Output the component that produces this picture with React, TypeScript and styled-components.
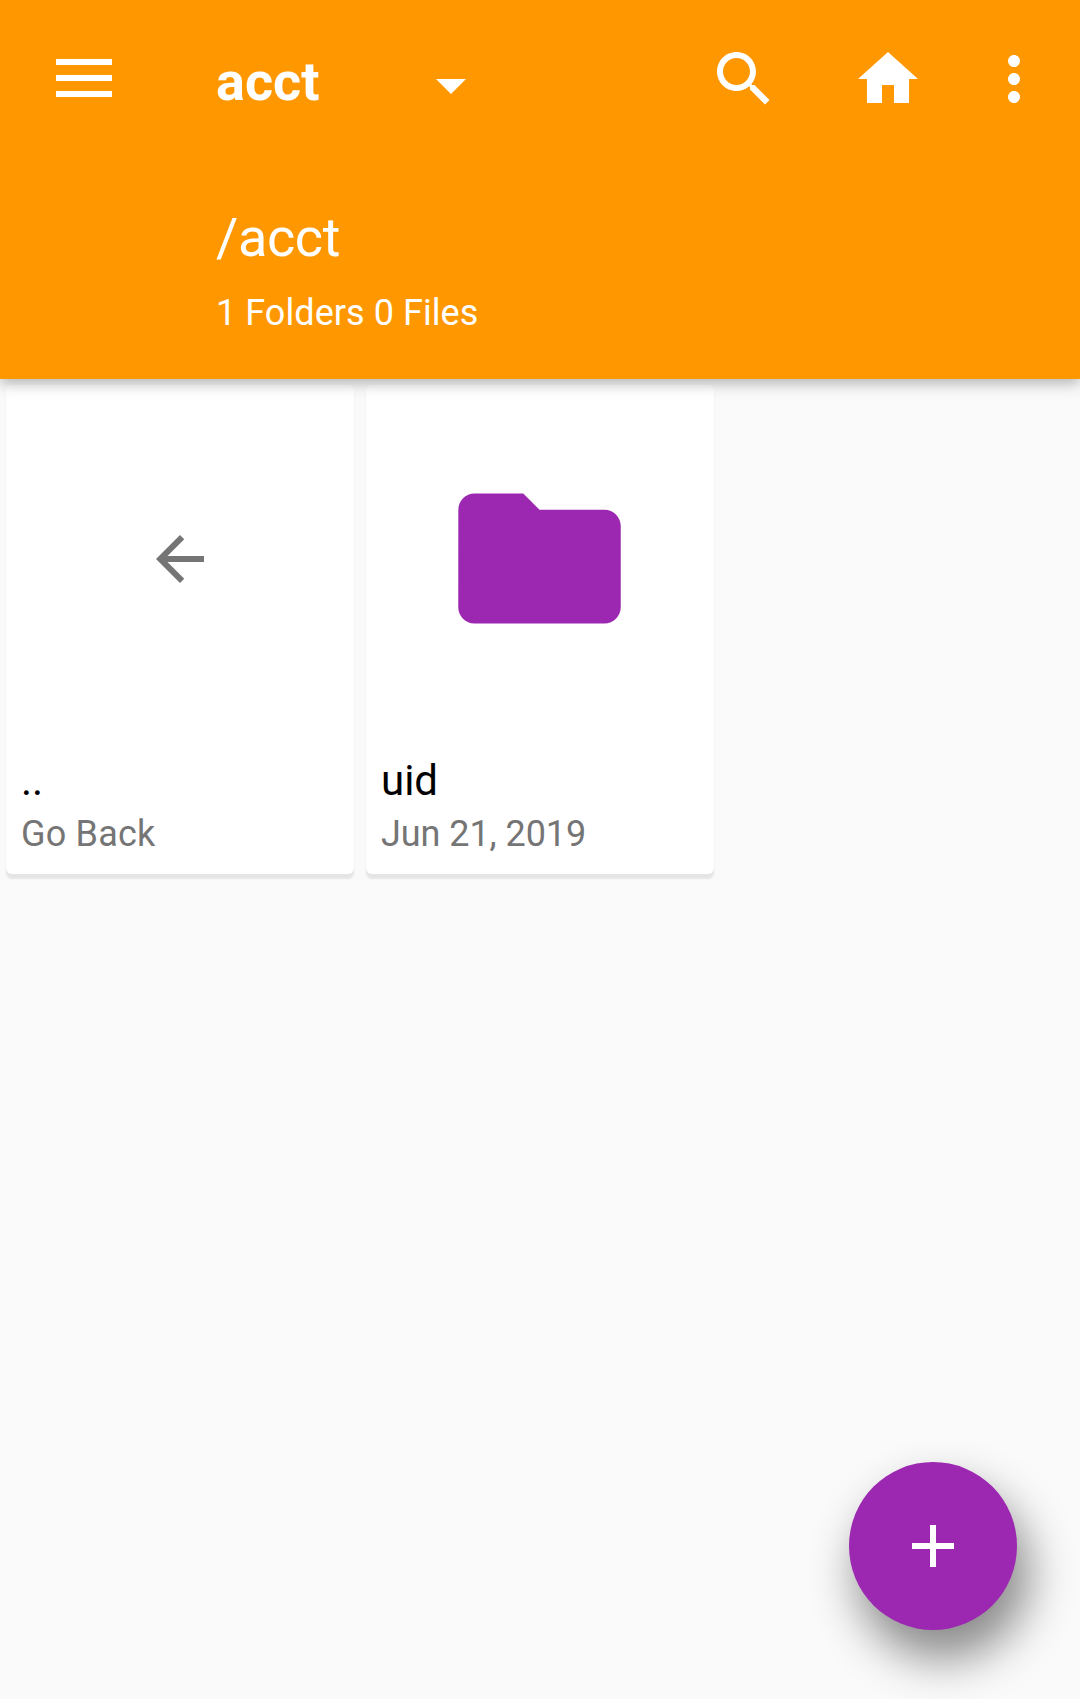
import React from "react";
import styled, { createGlobalStyle } from "styled-components";

const Global = createGlobalStyle`
  * { box-sizing: border-box; }
  html, body { margin: 0; background: #fafafa; }
  body { font-family: Roboto, "Noto Sans", sans-serif; }
`;

const Screen = styled.div`
  display: flex;
  flex-direction: column;
  width: 1080px;
  height: 1699px;
  background: #fafafa;
  overflow: hidden;
`;

const Header = styled.header`
  position: relative;
  z-index: 1;
  flex: none;
  height: 379px;
  background: #ff9800;
  color: #fff;
  box-shadow: 0 4px 14px rgba(0, 0, 0, 0.3);
`;

const Toolbar = styled.div`
  display: flex;
  align-items: center;
  height: 158px;
  padding: 0 12px 0 48px;
`;

const IconButton = styled.button<{ $width?: number; $lift?: number }>`
  display: flex;
  align-items: center;
  justify-content: center;
  width: ${(p) => p.$width ?? 144}px;
  height: 144px;
  margin-bottom: ${(p) => p.$lift ?? 0}px;
  padding: 0;
  border: 0;
  background: none;
  color: inherit;
  svg { display: block; fill: currentColor; }
`;

const PathPicker = styled.div`
  display: flex;
  align-items: center;
  justify-content: space-between;
  width: 271px;
  margin: 12px auto 0 96px;
`;

const Title = styled.h1`
  margin: 0 0 6px;
  font-size: 54px;
  line-height: 64px;
  font-weight: 700;
`;

const Details = styled.div`
  padding: 48px 0 0 216px;
`;

const Path = styled.div`
  font-size: 54px;
  line-height: 64px;
  letter-spacing: -0.35px;
`;

const Summary = styled.div`
  margin-top: 21px;
  font-size: 36px;
  line-height: 44px;
  letter-spacing: 0.06px;
`;

const Grid = styled.main`
  display: grid;
  grid-template-columns: repeat(3, 348px);
  gap: 12px;
  padding: 6px;
`;

const Card = styled.article`
  display: flex;
  flex-direction: column;
  height: 489px;
  border-radius: 6px;
  background: #fff;
  box-shadow: 0 5px 2px rgba(0, 0, 0, 0.085);
`;

const Preview = styled.div`
  display: flex;
  align-items: center;
  justify-content: center;
  height: 348px;
  svg { display: block; }
`;

const FolderIcon = styled.svg`
  width: 195px;
  height: 195px;
  margin: 0 1px 1px 0;
`;

const Caption = styled.div`
  display: flex;
  flex-direction: column;
  padding: 23px 15px 0;
`;

const Name = styled.div`
  font-size: 42px;
  line-height: 50px;
  color: #000;
`;

const Meta = styled.div<{ $tracking: number }>`
  margin-top: 6px;
  font-size: 36px;
  line-height: 44px;
  letter-spacing: ${(p) => p.$tracking}px;
  color: #757575;
`;

const Fab = styled.button`
  position: fixed;
  left: 849px;
  top: 1462px;
  display: flex;
  align-items: center;
  justify-content: center;
  width: 168px;
  height: 168px;
  padding: 0;
  border: 0;
  border-radius: 50%;
  background: #9c27b0;
  box-shadow: 10px 27px 46px 2px rgba(0, 0, 0, 0.45);
`;

const entries = [
  { name: "..", meta: "Go Back", kind: "back", tracking: 0.2 },
  { name: "uid", meta: "Jun 21, 2019", kind: "folder", tracking: -0.06 },
];

const EntryIcon = ({ kind }: { kind: string }) =>
  kind === "back" ? (
    <svg width="72" height="72" viewBox="0 0 24 24" fill="#757575">
      <path d="M20 11H7.83l5.59-5.59L12 4l-8 8 8 8 1.41-1.41L7.83 13H20v-2z" />
    </svg>
  ) : (
    <FolderIcon viewBox="0 0 24 24" fill="#9c27b0">
      <path d="M10 4H4c-1.1 0-1.99.9-1.99 2L2 18c0 1.1.9 2 2 2h16c1.1 0 2-.9 2-2V8c0-1.1-.9-2-2-2h-8l-2-2z" />
    </FolderIcon>
  );

export default function App() {
  return (
    <Screen>
      <Global />
      <Header>
        <Toolbar>
          <IconButton $width={72} $lift={2} aria-label="Menu">
            <svg width="72" height="72" viewBox="0 0 72 72">
              <path d="M8 17h56v6H8zM8 33h56v6H8zM8 49h56v6H8z" />
            </svg>
          </IconButton>
          <PathPicker>
            <Title>acct</Title>
            <svg width="72" height="72" viewBox="0 0 24 24" fill="#fff">
              <path d="M7 10l5 5 5-5z" />
            </svg>
          </PathPicker>
          <IconButton aria-label="Search">
            <svg width="72" height="72" viewBox="0 0 24 24">
              <path d="M15.5 14h-.79l-.28-.27C15.41 12.59 16 11.11 16 9.5 16 5.91 13.09 3 9.5 3S3 5.91 3 9.5 5.91 16 9.5 16c1.61 0 3.09-.59 4.23-1.57l.27.28v.79l5 4.99L20.49 19l-4.99-5zm-6 0C7.01 14 5 11.99 5 9.5S7.01 5 9.5 5 14 7.01 14 9.5 11.99 14 9.5 14z" />
            </svg>
          </IconButton>
          <IconButton aria-label="Home">
            <svg width="72" height="72" viewBox="0 0 24 24">
              <path d="M10 20v-6h4v6h5v-8h3L12 3 2 12h3v8z" />
            </svg>
          </IconButton>
          <IconButton $width={108} aria-label="More options">
            <svg width="72" height="72" viewBox="0 0 24 24">
              <path d="M12 8c1.1 0 2-.9 2-2s-.9-2-2-2-2 .9-2 2 .9 2 2 2zm0 2c-1.1 0-2 .9-2 2s.9 2 2 2 2-.9 2-2-.9-2-2-2zm0 6c-1.1 0-2 .9-2 2s.9 2 2 2 2-.9 2-2-.9-2-2-2z" />
            </svg>
          </IconButton>
        </Toolbar>
        <Details>
          <Path>/acct</Path>
          <Summary>1 Folders 0 Files</Summary>
        </Details>
      </Header>
      <Grid>
        {entries.map((e) => (
          <Card key={e.name}>
            <Preview>
              <EntryIcon kind={e.kind} />
            </Preview>
            <Caption>
              <Name>{e.name}</Name>
              <Meta $tracking={e.tracking}>{e.meta}</Meta>
            </Caption>
          </Card>
        ))}
      </Grid>
      <Fab aria-label="Add">
        <svg width="72" height="72" viewBox="0 0 24 24" fill="#fff">
          <path d="M19 13h-6v6h-2v-6H5v-2h6V5h2v6h6v2z" />
        </svg>
      </Fab>
    </Screen>
  );
}
